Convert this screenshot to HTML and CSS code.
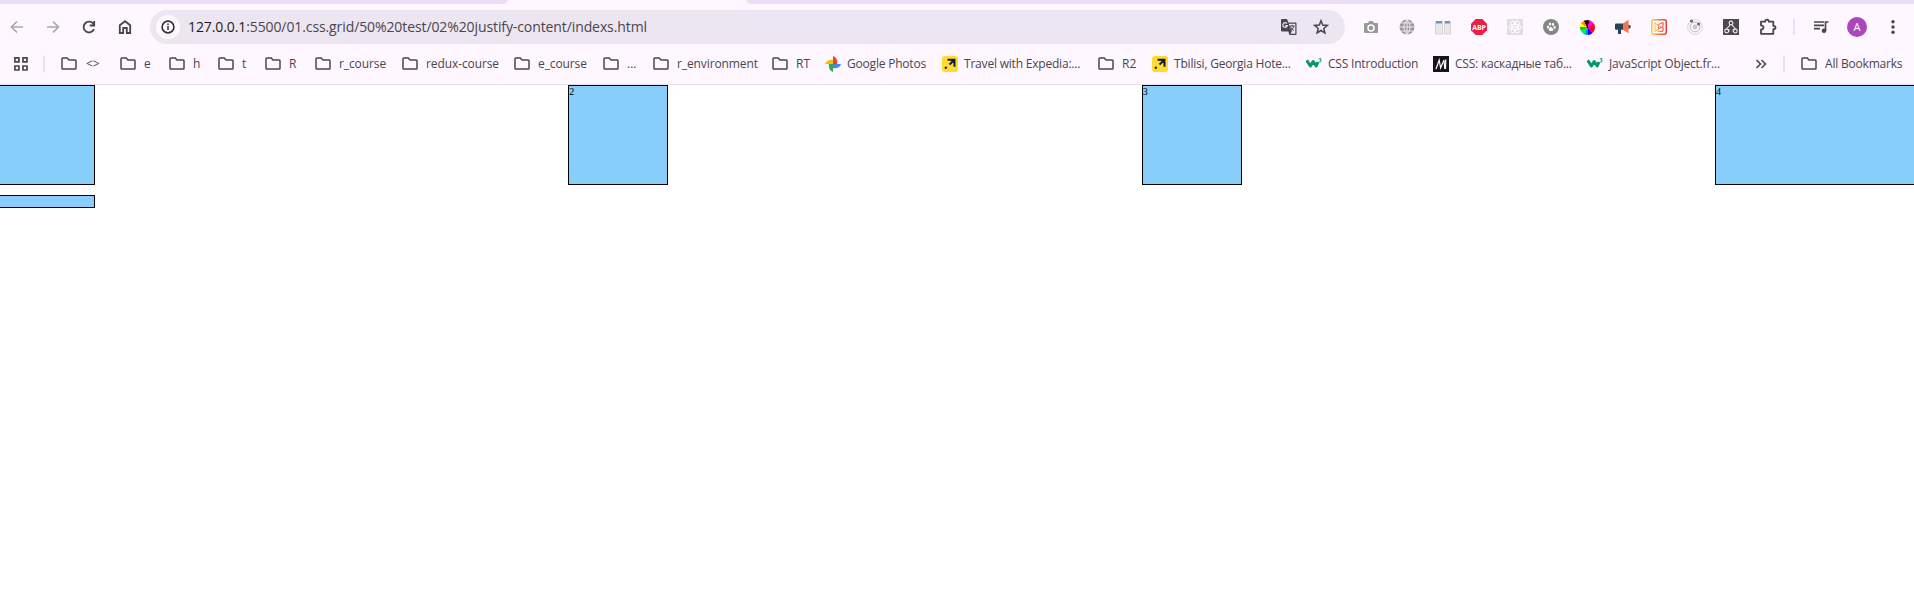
FILE: index.html
```html
<!DOCTYPE html>
<html lang="en">
<head>
<meta charset="utf-8">
<title>justify-content</title>
<link rel="stylesheet" href="styles.css">
</head>
<body>
<svg class="defs" width="0" height="0">
  <symbol id="folder" viewBox="0 0 16 14"><path d="M1 11.5V1.8q0-.8.8-.8h4.4l1.8 2h6.200q.8 0 .8.8v7.400q0 .8-.8.8H1.800q-.8 0-.8-.8z" fill="none" stroke="#49454f" stroke-width="1.5"/></symbol>
  <symbol id="expedia" viewBox="0 0 16 16"><rect width="16" height="16" rx="3" fill="#fddb32"/><path d="M5.500 3.800h7v7M12 4.300 7.500 8.500M4.700 10.900 3 12.500" fill="none" stroke="#1c1c30" stroke-width="2"/><path d="M8 3.500h4.800v5z" fill="#1c1c30"/></symbol>
  <symbol id="w3" viewBox="0 0 16 16"><path d="M.7 4.200 4.400 10l2.800-4.500L10.200 10l1.700-4" fill="none" stroke="#059862" stroke-width="3" stroke-linejoin="round"/><path d="M12.800 2.700h2.300l-1.200 1.400q1.500 0 1.400 1.200-.4 1.200-2.500.6" fill="none" stroke="#059862" stroke-width=".9"/></symbol>
</svg>
<header class="chrome">
  <div class="tabs"><div class="tab-left"></div><div class="tab-right"></div></div>
  <div class="toolbar">
    <nav class="nav">
      <span class="cell"><svg width="16" height="16" viewBox="0 0 16 16" fill="none" stroke="#aaa5af" stroke-width="1.700"><path d="M14 8H3M8 2.500 2.500 8 8 13.500"/></svg></span>
      <span class="cell"><svg width="16" height="16" viewBox="0 0 16 16" fill="none" stroke="#aaa5af" stroke-width="1.700"><path d="M2 8h11M8 2.500 13.500 8 8 13.500"/></svg></span>
      <span class="cell"><svg width="16" height="16" viewBox="0 0 16 16" fill="none" stroke="#49454f" stroke-width="1.800"><path d="M13 10.200A5.400 5.400 0 1 1 12.500 5M13.200 2v4.500H8.700"/></svg></span>
      <span class="cell"><svg width="16" height="16" viewBox="0 0 16 16" fill="none" stroke="#49454f" stroke-width="1.800"><path d="M2.800 14V6.300L8 2.200l5.200 4.100V14H9.800V9H6.200v5z"/></svg></span>
    </nav>
    <div class="omnibox">
      <span class="info"><svg width="14" height="14" viewBox="0 0 14 14"><circle cx="7" cy="7" r="5.900" fill="none" stroke="#302c36" stroke-width="1.600"/><path d="M7 6v4M7 3.600v1.500" stroke="#302c36" stroke-width="1.500"/></svg></span>
      <span class="url"><b>127.0.0.1</b>:5500/01.css.grid/50%20test/02%20justify-content/indexs.html</span>
      <svg class="translate" width="18" height="18" viewBox="0 0 18 18"><path d="M2 1h5l1.300 3.500H15.500q1 0 1 1v10.500q0 1-1 1H9.500L8.300 13.500H2q-1 0-1-1V2q0-1 1-1z" fill="#49454f"/><path d="M8.700 5.700h6.600v10h-4.800l1.300-2.200z" fill="#ece6f0"/><path d="M6.900 5.600a2.300 2.300 0 1 0 .4 2H5.200" fill="none" stroke="#ece6f0" stroke-width="1.200"/><path d="M9.700 8h5M12.200 6.800V8M10.300 8.500q1 3 3.700 4.200M13.800 8.300q-.8 3-3.300 4.500" fill="none" stroke="#49454f"/></svg>
      <svg class="star" width="16" height="16" viewBox="0 0 16 16"><path d="m8 1.800 1.700 4.300 4.600.3-3.500 3 1.100 4.500L8 11.500l-3.900 2.400 1.100-4.500-3.500-3 4.600-.3z" fill="none" stroke="#49454f" stroke-width="1.500"/></svg>
    </div>
    <div class="extensions">
      <span class="cell"><svg width="16" height="16" viewBox="0 0 16 16"><path d="M2 4h3l1.300-2h3.400L11 4h3q1 0 1 1v8q0 1-1 1H2q-1 0-1-1V5q0-1 1-1z" fill="#999"/><circle cx="8" cy="9" r="3" fill="none" stroke="#fff" stroke-width="1.500"/></svg></span>
      <span class="cell"><svg width="16" height="16" viewBox="0 0 16 16"><circle cx="8" cy="8" r="7.500" fill="#999"/><path d="M8 0v16M0 8h16M2 4h12M2 12h12M8 .5Q1.500 8 8 15.500M8 .5Q14.500 8 8 15.500" fill="none" stroke="#f5eff6" stroke-width=".9"/></svg></span>
      <span class="cell"><svg width="16" height="16" viewBox="0 0 16 16"><path d="M.5 2.500h7V15h-7zM9.500 2.500h6V15h-6z" fill="#e8e8e6" stroke="#d6d5d3"/><path d="M1 2h6v2.500H1zM10 2h5v2.500h-5z" fill="#7095c5"/></svg></span>
      <span class="cell"><svg width="16" height="16" viewBox="0 0 16 16"><path d="M4.700 0h6.600L16 4.700v6.600L11.300 16H4.700L0 11.300V4.700z" fill="#ed1e45"/><text x="8" y="10.700" class="abp" text-anchor="middle" textLength="13.600" lengthAdjust="spacingAndGlyphs">ABP</text></svg></span>
      <span class="cell"><svg width="16" height="16" viewBox="0 0 16 16"><path d="M0 0h16v16H0z" fill="#dfdddf"/><g fill="none" stroke="#fff"><ellipse cx="8" cy="8" rx="6.500" ry="2.600"/><ellipse cx="8" cy="8" rx="6.500" ry="2.600" transform="rotate(60 8 8)"/><ellipse cx="8" cy="8" rx="6.500" ry="2.600" transform="rotate(120 8 8)"/></g><circle cx="8" cy="8" r="1.300" fill="#fff"/></svg></span>
      <span class="cell"><svg width="16" height="16" viewBox="0 0 16 16"><circle cx="8" cy="8" r="8" fill="#858585"/><g fill="#fff"><ellipse cx="5" cy="8" rx="1.100" ry="1.500"/><ellipse cx="7" cy="5" rx="1.100" ry="1.600"/><ellipse cx="10" cy="5.300" rx="1.100" ry="1.600"/><ellipse cx="11.600" cy="8.500" rx="1.100" ry="1.400"/><path d="M8 7.800q1.200.5 2.400 2.700.4 1.800-2.400 1.400-2.700.2-2.400-1.600Q6.500 8 8 7.800"/></g></svg></span>
      <span class="cell"><i class="wheel"></i></span>
      <span class="cell"><svg width="16" height="16" viewBox="0 0 16 16"><path d="M0 5.500q0-1 1-1h7v6.300H6V15H3v-4.200H1q-1 0-1-1z" fill="#26445b"/><path d="M8 4.500 13.500.8v13.500L8 10.800z" fill="#ff7043"/><path d="M13.500 5.800q2.300 0 2.300 2t-2.300 2z" fill="#26445b"/></svg></span>
      <span class="cell"><svg width="16" height="16" viewBox="0 0 16 16"><defs><linearGradient id="warm"><stop stop-color="#ffc34d"/><stop offset="1" stop-color="#e43c38"/></linearGradient></defs><rect x=".75" y=".75" width="14.500" height="14.500" rx="2" fill="#fffaf5" stroke="url(#warm)" stroke-width="1.500"/><path d="M4 3.500v9.300M4 4l6 4.200L4 12.500M6.500 12.300h5.500V8M12 3.500v4L7.500 10V5.500z" fill="none" stroke="url(#warm)"/></svg></span>
      <span class="cell"><svg width="16" height="16" viewBox="0 0 16 16" fill="none"><circle cx="8" cy="8" r="7.300" stroke="#d7d2d9"/><circle cx="8" cy="8" r="4.800" stroke="#bdb9bf"/><circle cx="8" cy="8" r="2.400" fill="#c8c5ca"/><circle cx="4.500" cy="2" r="1.600" fill="#69666c"/><circle cx="11.600" cy="5" r="1.600" fill="#69666c"/></svg></span>
      <span class="cell"><svg width="16" height="16" viewBox="0 0 16 16" fill="none"><path d="M0 0h16v16H0z" fill="#4b4b4b"/><g stroke="#eee" stroke-width="1.100"><circle cx="8" cy="4" r="1.900"/><circle cx="3.700" cy="12" r="1.900"/><circle cx="12.300" cy="12" r="1.900"/><path d="M7 6 3.500 10M9 6l3.500 4M5.800 10v3M10.300 10v3"/></g></svg></span>
      <span class="cell puzzle"><svg width="18" height="18" viewBox="0 0 18 18"><path d="M2 3.700h4.200Q6.200 1.700 8 1.700t1.800 2h4.500v4.100q2.200 0 2.200 1.700t-2.200 1.700v4.600H2v-4.200q2.500-.2 2.500-2.100T2 7.400z" fill="none" stroke="#49454f" stroke-width="1.800" stroke-linejoin="round"/></svg></span>
      <span class="divider"></span>
      <span class="cell music"><svg width="18" height="16" viewBox="0 0 18 16"><path d="M2 3h10M2 6.300h10M2 9.700h6M13.500 12V3h3" fill="none" stroke="#49454f" stroke-width="1.700"/><circle cx="12" cy="11.700" r="2.300" fill="#49454f"/></svg></span>
      <span class="cell"><span class="avatar">A</span></span>
      <span class="cell"><svg width="4" height="16" viewBox="0 0 4 16" fill="#49454f"><circle cx="2" cy="2.700" r="1.700"/><circle cx="2" cy="8" r="1.700"/><circle cx="2" cy="13.300" r="1.700"/></svg></span>
    </div>
  </div>
  <div class="bookmarks">
    <svg class="apps" width="14" height="14" viewBox="0 0 14 14" fill="none" stroke="#49454f" stroke-width="1.700"><path d="M.9.9h4v4h-4zM9 .9h4v4H9zM.9 9h4v4h-4zM9 9h4v4H9z"/></svg>
    <span class="divider short"></span>
    <a class="mark m1"><svg class="f"><use href="#folder"/></svg><span>&lt;&gt;</span></a>
    <a class="mark m2"><svg class="f"><use href="#folder"/></svg><span>e</span></a>
    <a class="mark m3"><svg class="f"><use href="#folder"/></svg><span>h</span></a>
    <a class="mark m4"><svg class="f"><use href="#folder"/></svg><span>t</span></a>
    <a class="mark m5"><svg class="f"><use href="#folder"/></svg><span>R</span></a>
    <a class="mark m6"><svg class="f"><use href="#folder"/></svg><span>r_course</span></a>
    <a class="mark m7"><svg class="f"><use href="#folder"/></svg><span>redux-course</span></a>
    <a class="mark m8"><svg class="f"><use href="#folder"/></svg><span>e_course</span></a>
    <a class="mark m9"><svg class="f"><use href="#folder"/></svg><span>...</span></a>
    <a class="mark m10"><svg class="f"><use href="#folder"/></svg><span>r_environment</span></a>
    <a class="mark m11"><svg class="f"><use href="#folder"/></svg><span>RT</span></a>
    <a class="mark site m12"><svg class="s" viewBox="0 0 16 16"><path d="M8 0v8h4.300Q12.700 1.300 8 0" fill="#ea4335"/><path d="M16 8H8v4.200Q14.300 13 16 8" fill="#4285f4"/><path d="M8 16V8H3.800Q3.300 14.500 8 16" fill="#34a853"/><path d="M0 8h8V3.700Q1.500 3.500 0 8" fill="#fbbc04"/></svg><span>Google Photos</span></a>
    <a class="mark site m13"><svg class="s"><use href="#expedia"/></svg><span>Travel with Expedia:...</span></a>
    <a class="mark m14"><svg class="f"><use href="#folder"/></svg><span>R2</span></a>
    <a class="mark site m15"><svg class="s"><use href="#expedia"/></svg><span>Tbilisi, Georgia Hote...</span></a>
    <a class="mark site m16"><svg class="s"><use href="#w3"/></svg><span>CSS Introduction</span></a>
    <a class="mark site m17"><svg class="s" viewBox="0 0 16 16"><path d="M0 0h16v16H0z" fill="#15141a"/><path d="m3 13 3.200-9 1.400 8L11 4l.8 9M12.800 3.500 12.500 13" fill="none" stroke="#fff" stroke-width="1.200"/></svg><span>CSS: каскадные таб...</span></a>
    <a class="mark site m18"><svg class="s"><use href="#w3"/></svg><span>JavaScript Object.fr...</span></a>
    <svg class="more" width="12" height="10" viewBox="0 0 12 10"><path d="m1.500 1 4 4-4 4M6.500 1l4 4-4 4" fill="none" stroke="#49454f" stroke-width="1.600"/></svg>
    <span class="divider short end"></span>
    <a class="mark m19"><svg class="f"><use href="#folder"/></svg><span>All Bookmarks</span></a>
  </div>
</header>
<main class="grid">
  <div class="item"></div>
  <div class="item">2</div>
  <div class="item">3</div>
  <div class="item wide">4</div>
  <div class="item"></div>
</main>
</body>
</html>
```
FILE: styles.css
```css
* { box-sizing: border-box; }
body { margin: 0; height: 614px; overflow: hidden; background: #fff; font-family: "Open Sans", "Noto Sans", sans-serif; }
svg { display: block; flex: none; }
.defs { position: absolute; }
.chrome { height: 85px; background: #fef7ff; border-bottom: 1px solid #e7e0ec; color: #49454f; }
.tabs { display: flex; justify-content: space-between; height: 4px; }
.tab-left { width: 508px; background: #ebddf7; border-bottom-right-radius: 6px 4px; }
.tab-right { width: 1168px; background: #ebddf7; border-bottom-left-radius: 6px 4px; }
.toolbar { display: flex; align-items: center; height: 46px; }
.nav { display: flex; width: 151px; padding-left: 0; margin-left: -1px; }
.extensions { display: flex; align-items: center; margin-left: 8px; }
.cell { display: flex; flex: none; align-items: center; justify-content: center; width: 36px; }
.omnibox { display: flex; align-items: center; width: 1195px; height: 34px; border-radius: 17px; background: #ece6f0; padding-left: 6px; }
.info { display: flex; align-items: center; justify-content: center; width: 24px; height: 24px; border-radius: 50%; background: #fef7ff; }
.url { width: 1092px; margin-left: 8px; font-size: 14px; line-height: 20px; white-space: nowrap; letter-spacing: -.1px; }
.url b { font-weight: 400; color: #1d1b20; }
.star { margin-left: 15px; }
.abp { font: 700 7px "Open Sans", sans-serif; fill: #fff; }
.wheel { width: 15px; height: 15px; border-radius: 50%; background: conic-gradient(#111 0 4%, #f0f 4% 16%, #f04 16% 28%, #f00 28% 36%, #e0e 36% 38%, #00f 38% 48%, #08f 48% 56%, #0e6 56% 68%, #0c0 68% 76%, #ff0 76% 84%, #f80 84% 92%, #200 92%); }
.puzzle { margin-left: 1px; }
.divider { width: 2px; height: 16px; margin-left: 7px; background: #eaddff; flex: none; }
.music { margin-left: 8px; }
.avatar { width: 20px; height: 20px; border-radius: 50%; background: #ab47bc; color: #fff; text-align: center; font-size: 11px; line-height: 20px; }
.bookmarks { display: flex; align-items: center; height: 28px; padding-left: 14px; font-size: 12px; line-height: 16px; }
.short { margin: 0 16px 0 15px; }
.mark { display: flex; flex: none; align-items: center; gap: 8px; white-space: nowrap; }
.site { gap: 6px; }
.f { width: 16px; height: 14px; }
.s { width: 16px; height: 16px; }
.m1 { width: 59px; gap: 9px; }
.m2 { width: 49px; }
.m3 { width: 49px; }
.m4 { width: 47px; }
.m5 { width: 50px; }
.m6 { width: 87px; letter-spacing: -.1px; }
.m7 { width: 112px; letter-spacing: -.1px; }
.m8 { width: 89px; letter-spacing: -.1px; }
.m9 { width: 50px; }
.m10 { width: 119px; letter-spacing: -.1px; }
.m11 { width: 53px; }
.m12 { width: 117px; letter-spacing: -.2px; }
.m13 { width: 156px; letter-spacing: -.2px; }
.m14 { width: 54px; }
.m15 { width: 154px; letter-spacing: -.2px; }
.m16 { width: 127px; letter-spacing: -.2px; }
.m17 { width: 154px; letter-spacing: -.2px; }
.m18 { width: 168px; letter-spacing: -.2px; }
.m19 { letter-spacing: -.2px; }
.more { margin-top: 0; }
.end { margin-left: 16px; }
.grid { display: grid; grid-template-columns: repeat(4, 100px); grid-template-rows: 100px auto; row-gap: 10px; justify-content: space-between; width: 1820px; margin-left: -5px; font: 10px/11px "Liberation Serif", serif; }
.item { min-height: 13px; background: #87cefa; border: 1px solid #000; }
.wide { width: 220px; }
```
